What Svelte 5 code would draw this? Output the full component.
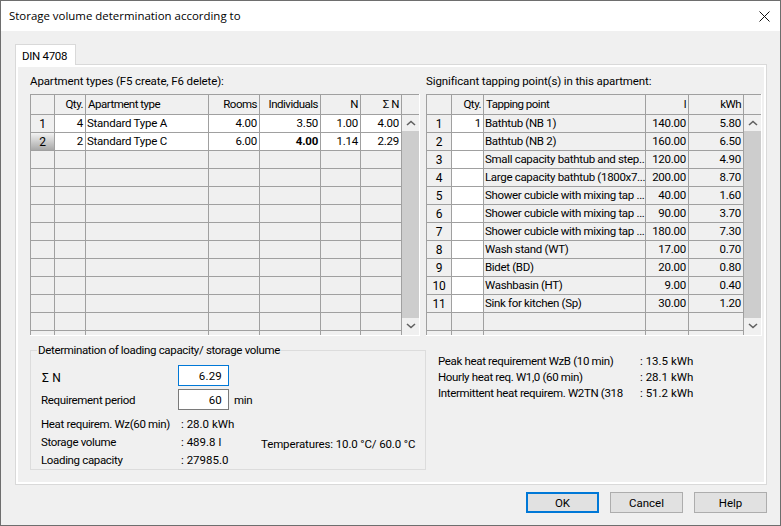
<script lang="ts">
	const apartments = [
		{ qty: '4', name: 'Standard Type A', rooms: '4.00', people: '3.50', n: '1.00', sum: '4.00' },
		{ qty: '2', name: 'Standard Type C', rooms: '6.00', people: '4.00', n: '1.14', sum: '2.29' }
	];

	const tapping = [
		['1', 'Bathtub (NB 1)', '140.00', '5.80'],
		['', 'Bathtub (NB 2)', '160.00', '6.50'],
		['', 'Small capacity bathtub and step...', '120.00', '4.90'],
		['', 'Large capacity bathtub (1800x7...', '200.00', '8.70'],
		['', 'Shower cubicle with mixing tap ...', '40.00', '1.60'],
		['', 'Shower cubicle with mixing tap ...', '90.00', '3.70'],
		['', 'Shower cubicle with mixing tap ...', '180.00', '7.30'],
		['', 'Wash stand (WT)', '17.00', '0.70'],
		['', 'Bidet (BD)', '20.00', '0.80'],
		['', 'Washbasin (HT)', '9.00', '0.40'],
		['', 'Sink for kitchen (Sp)', '30.00', '1.20']
	];

	const leftBlank = Array(11);
	const rightBlank = Array(2);

	const peaks = [
		['Peak heat requirement WzB (10 min)', ': 13.5 kWh'],
		['Hourly heat req. W1,0 (60 min)', ': 28.1 kWh'],
		['Intermittent heat requirem. W2TN (318', ': 51.2 kWh']
	];
</script>

{#snippet scrollbar()}
	<div class="scroll">
		<div class="scroll-head"></div>
		<div class="arrow">
			<svg width="10" height="6" viewBox="0 0 10 6"><path d="M1 5 L5 1.5 L9 5" fill="none" stroke="#606060" stroke-width="1.6" /></svg>
		</div>
		<div class="thumb"></div>
		<div class="arrow">
			<svg width="10" height="6" viewBox="0 0 10 6"><path d="M1 1 L5 4.5 L9 1" fill="none" stroke="#606060" stroke-width="1.6" /></svg>
		</div>
	</div>
{/snippet}

<div class="window">
	<header class="title">
		<span>Storage volume determination according to</span>
		<svg class="close" width="11" height="11" viewBox="0 0 11 11"><path d="M0.5 0.5 L10.5 10.5 M10.5 0.5 L0.5 10.5" stroke="#111" stroke-width="1" /></svg>
	</header>

	<div class="body">
		<div class="tab">DIN 4708</div>
		<section class="panel">
			<div class="top">
				<div class="col col-left">
					<div class="caption">Apartment types (F5 create, F6 delete):</div>
					<div class="grid-wrap">
						<div class="table table-left">
							<div class="c hdr"></div>
							<div class="c hdr r">Qty.</div>
							<div class="c hdr">Apartment type</div>
							<div class="c hdr r">Rooms</div>
							<div class="c hdr r">Individuals</div>
							<div class="c hdr r">N</div>
							<div class="c hdr r">Σ N</div>

							{#each apartments as row, i}
								<div class="c head" class:current={i === 1}>{i + 1}</div>
								<div class="c r w">{row.qty}</div>
								<div class="c w">{row.name}</div>
								<div class="c r w">{row.rooms}</div>
								<div class="c r w" class:bold={i === 1}>{row.people}</div>
								<div class="c r w">{row.n}</div>
								<div class="c r w">{row.sum}</div>
							{/each}

							{#each leftBlank as _}
								{#each Array(7) as __}
									<div class="c"></div>
								{/each}
							{/each}
						</div>
						{@render scrollbar()}
					</div>
				</div>

				<div class="col col-right">
					<div class="caption">Significant tapping point(s) in this apartment:</div>
					<div class="grid-wrap">
						<div class="table table-right">
							<div class="c hdr"></div>
							<div class="c hdr r">Qty.</div>
							<div class="c hdr">Tapping point</div>
							<div class="c hdr r">l</div>
							<div class="c hdr r">kWh</div>

							{#each tapping as row, i}
								<div class="c head">{i + 1}</div>
								<div class="c r w">{row[0]}</div>
								<div class="c tap">{row[1]}</div>
								<div class="c r">{row[2]}</div>
								<div class="c r">{row[3]}</div>
							{/each}

							{#each rightBlank as _}
								{#each Array(5) as __}
									<div class="c"></div>
								{/each}
							{/each}
						</div>
						{@render scrollbar()}
					</div>
				</div>
			</div>

			<div class="bottom">
				<fieldset class="group">
					<legend>Determination of loading capacity/ storage volume</legend>
					<div class="form">
						<span class="sigma">Σ N</span>
						<input class="field focused" value="6.29" readonly />
						<span></span>
						<span>Requirement period</span>
						<input class="field" value="60" readonly />
						<span class="unit">min</span>
					</div>
					<div class="results">
						<span>Heat requirem. Wz(60 min)</span>
						<span class="value">: 28.0 kWh</span>
						<span></span>
						<span>Storage volume</span>
						<span class="value">: 489.8 l</span>
						<span class="temps">Temperatures: 10.0 °C/ 60.0 °C</span>
						<span>Loading capacity</span>
						<span class="value">: 27985.0</span>
						<span></span>
					</div>
				</fieldset>

				<div class="peaks">
					{#each peaks as [label, value]}
						<span class="peak-label">{label}</span>
						<span class="value">{value}</span>
					{/each}
				</div>
			</div>
		</section>

		<footer class="buttons">
			<button class="default">OK</button>
			<button>Cancel</button>
			<button>Help</button>
		</footer>
	</div>
</div>

<style>
	:global(body) {
		margin: 0;
		background: #f0f0f0;
	}

	.window {
		box-sizing: border-box;
		width: 781px;
		height: 526px;
		border: 1px solid #6e6e6e;
		background: #f0f0f0;
		color: #000;
		font-family: Roboto, 'Liberation Sans', sans-serif;
		font-size: 11.5px;
		line-height: 16px;
		overflow: hidden;
	}

	.title {
		display: flex;
		align-items: center;
		justify-content: space-between;
		height: 30px;
		padding: 0 10px 0 8px;
		background: #fff;
		font-family: 'Open Sans', 'Liberation Sans', sans-serif;
		font-size: 11.45px;
	}

	.body {
		padding: 13px 13px 0 14px;
	}

	.tab {
		position: relative;
		z-index: 1;
		box-sizing: border-box;
		width: 61px;
		height: 21px;
		margin-bottom: -1px;
		padding: 3px 0 0 6px;
		background: #fff;
		border: 1px solid #d9d9d9;
		border-bottom: 0;
		letter-spacing: -0.3px;
	}

	.panel {
		box-sizing: border-box;
		height: 421px;
		padding: 8px 0 0 14px;
		border: 1px solid #d9d9d9;
		box-shadow: inset 0 0 0 2px #fff;
	}

	.top {
		display: flex;
		gap: 6px;
	}

	.caption {
		height: 16px;
		margin-bottom: 5px;
		letter-spacing: -0.12px;
	}

	.grid-wrap {
		display: flex;
		height: 242px;
		border-bottom: 1px solid #fff;
		box-sizing: border-box;
		overflow: hidden;
	}

	.table {
		display: grid;
		grid-template-rows: 20px;
		grid-auto-rows: 18px;
		align-content: start;
		border-top: 1px solid #a0a0a0;
		border-left: 1px solid #a0a0a0;
	}

	.table-left {
		grid-template-columns: 24px 31px 123px 51px 61px 40px 41px;
	}

	.table-right {
		grid-template-columns: 25px 32px 162px 43px 55px;
	}

	.c {
		box-sizing: border-box;
		padding: 0 2px 0 1px;
		line-height: 17px;
		white-space: nowrap;
		overflow: hidden;
		border-right: 1px solid #a0a0a0;
		border-bottom: 1px solid #a0a0a0;
		letter-spacing: -0.25px;
	}

	.hdr {
		padding-top: 1px;
		padding-left: 2px;
		letter-spacing: -0.5px;
	}

	.tap {
		padding-right: 1px;
		letter-spacing: -0.32px;
	}

	.r {
		text-align: right;
	}

	.w {
		background: #fff;
	}

	.bold {
		font-weight: 700;
	}

	.head {
		padding-left: 2px;
		padding-top: 1px;
		text-align: center;
		font-size: 12px;
	}

	.current {
		background: linear-gradient(#f2f2f2, #a8a8a8);
	}

	.scroll {
		display: flex;
		flex-direction: column;
		width: 17px;
		border-right: 1px solid #fff;
	}

	.scroll-head {
		flex: none;
		box-sizing: border-box;
		height: 21px;
		border-top: 1px solid #a0a0a0;
		border-bottom: 1px solid #a0a0a0;
	}

	.arrow {
		flex: none;
		display: flex;
		align-items: center;
		justify-content: center;
		height: 16px;
	}

	.thumb {
		flex: none;
		height: 187px;
		background: #cdcdcd;
	}

	.bottom {
		display: flex;
		gap: 12px;
		margin-top: 6px;
	}

	.group {
		box-sizing: border-box;
		width: 396px;
		height: 128px;
		margin: 0;
		padding: 7px 0 0 10px;
		border: 1px solid #dcdcdc;
		letter-spacing: -0.34px;
	}

	.group legend {
		margin-left: -4px;
		padding: 0 1px;
	}

	.form {
		display: grid;
		grid-template-columns: 137px 51px auto;
		grid-auto-rows: 21px;
		row-gap: 3px;
		justify-content: start;
		align-items: center;
	}

	.sigma {
		padding: 4px 0 0 1px;
		letter-spacing: 0.2px;
		font-size: 12px;
	}

	.unit {
		padding-left: 5px;
	}

	.field {
		box-sizing: border-box;
		width: 51px;
		height: 21px;
		margin: 0;
		padding: 0 6px;
		border: 1px solid #7a7a7a;
		border-radius: 0;
		outline: 0;
		background: #fff;
		color: #000;
		font: inherit;
		text-align: right;
		letter-spacing: 0.2px;
	}

	.focused {
		border-color: #0078d7;
	}

	.results {
		display: grid;
		grid-template-columns: 140px 80px auto;
		grid-auto-rows: 18px;
		margin-top: 5px;
		line-height: 18px;
		white-space: nowrap;
	}

	.value {
		letter-spacing: 0;
	}

	.temps {
		padding-top: 2px;
		letter-spacing: -0.13px;
	}

	.peaks {
		display: grid;
		grid-template-columns: 202px auto;
		grid-auto-rows: 16px;
		align-content: start;
		margin-top: 11px;
		letter-spacing: -0.34px;
	}

	.peak-label {
		overflow: hidden;
		white-space: nowrap;
	}

	.buttons {
		display: flex;
		justify-content: flex-end;
		gap: 11px;
		margin-top: 7px;
	}

	button {
		box-sizing: border-box;
		width: 73px;
		height: 21px;
		padding: 0;
		border: 1px solid #adadad;
		border-radius: 0;
		background: #e1e1e1;
		color: #000;
		font: inherit;
	}

	.default {
		border: 2px solid #0078d7;
	}
</style>
